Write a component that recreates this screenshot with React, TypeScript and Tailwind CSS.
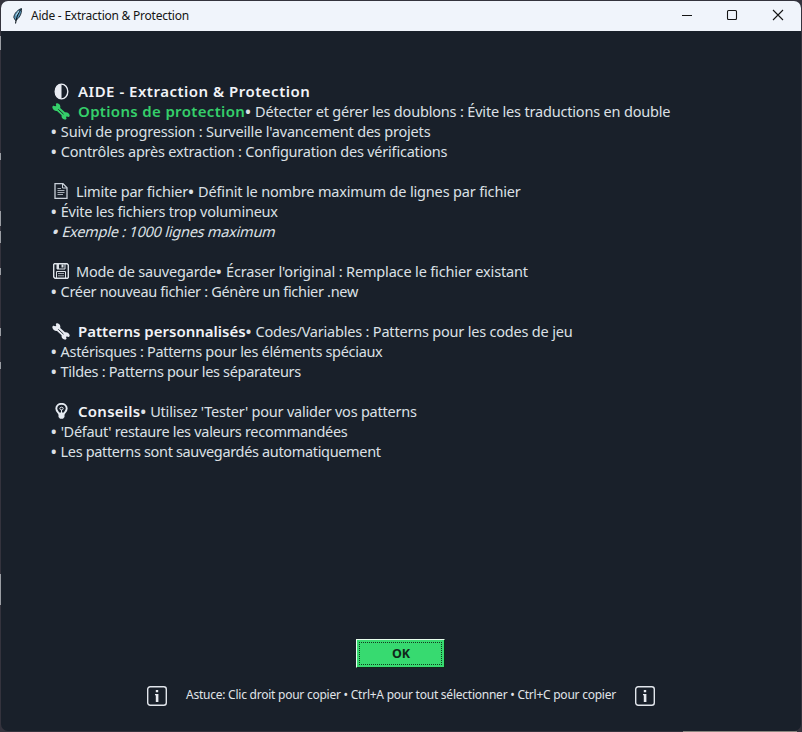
import React, { useLayoutEffect, useRef, useState } from "react";

type TextRunProps = { w: number; children: string; className?: string };

// A run of text whose tracking is adjusted to fill a given width.
function Run({ w, children, className = "" }: TextRunProps) {
  const ref = useRef<HTMLSpanElement>(null);
  const [spacing, setSpacing] = useState(0);
  useLayoutEffect(() => {
    const natural = ref.current!.offsetWidth - spacing * children.length;
    setSpacing((w - natural) / children.length);
  }, [w, children]);
  const bulleted = children.startsWith("•");
  return (
    <span ref={ref} className={"inline-block shrink-0 whitespace-pre " + className} style={{ letterSpacing: spacing }}>
      {bulleted && <span className="mr-px font-bold">• </span>}
      {bulleted ? children.slice(2) : children}
    </span>
  );
}

function Feather() {
  return (
    <svg className="ml-[10px] h-4 w-[14px] shrink-0" viewBox="0 0 14 16">
      <path d="M10.500.5C7 1.500 3 5.500 2.800 9.500L4.500 12.500C8 10.500 11 6 10.500.5Z" fill="#5796ba" stroke="#17212b" strokeWidth=".9" />
      <path d="M9.800 1.500C7 5 5.500 9 4.500 15.500" fill="none" stroke="#0c151d" strokeWidth="1.100" />
      <path d="M8 3L5 7.500" stroke="#b9e0f0" />
    </svg>
  );
}

function HalfCircle() {
  return (
    <svg className="mr-[8px] ml-[3px] h-[17px] w-[15px] shrink-0" viewBox="0 0 15 17">
      <path d="M7.500 1A6.400 7.500 0 0 0 7.500 16Z" fill="#e8ebf2" />
      <ellipse cx="7.500" cy="8.500" rx="6.300" ry="7.400" fill="none" stroke="#e8ebf2" strokeWidth="1.400" />
    </svg>
  );
}

function Wrench({ className }: { className: string }) {
  return (
    <svg className={"mr-[7px] ml-px h-[17px] w-[18px] shrink-0 " + className} viewBox="0 0 18 17">
      <path
        d="M.3 4.200C.3 3 1.300 2.300 2.300 2.900L3.600 3.300L4.300 2.600L3.900 1.700C3.700.6 4.800-.1 6 .4C8 1.200 8.700 3 8.200 4.900L13 9.300C15.400 8.900 17.500 10.500 17.700 12.600C17.700 13.800 16.700 14.200 15.900 13.700L14.700 13.400L14 14.100L14.400 15C14.800 16.200 13.700 16.900 12.500 16.600C10.300 16 9.200 14.200 9.600 12.300L5 8C2.800 8.200.7 6.700.3 4.200Z"
        fill="currentColor"
      />
      <path d="M6.300 6.300L11.500 11.200" stroke="#19202a" strokeWidth=".9" />
    </svg>
  );
}

function Page() {
  return (
    <svg className="mr-[8px] ml-[3px] h-4 w-[14px] shrink-0" viewBox="0 0 14 16" fill="none" stroke="#c9d0d9">
      <path d="M1 .7H9L13 4.700V15.300H1Z" strokeWidth="1.300" />
      <path d="M8.500 1V5H13" />
      <path d="M3.500 5.500H7M3.500 7.500H10.500M3.500 9.500H10.500M3.500 11.500H9" strokeWidth=".8" />
    </svg>
  );
}

function Floppy() {
  return (
    <svg className="mr-[7px] ml-[2px] h-4 w-4 shrink-0" viewBox="0 0 16 16" fill="none" stroke="#dce2e8">
      <path d="M1.500.7H14L15.300 2V14.500L14.500 15.300H2L.7 14V1.500Z" strokeWidth="1.400" />
      <path d="M4 1V6H12V1M3.500 15V8.500H12.500V15" />
      <path d="M5 10.500H11M5 12.800H11" strokeWidth=".7" />
      <path d="M4 1H6V6H4ZM8.500 1.500H10.500V4.500H8.500Z" fill="#dce2e8" stroke="none" />
    </svg>
  );
}

function Bulb() {
  return (
    <svg className="mr-[9px] ml-[4px] h-4 w-[13px] shrink-0" viewBox="0 0 13 16">
      <path d="M4 10.500C3 8.800 1.300 8 1.300 5.600A5.200 4.800 0 0 1 11.700 5.600C11.700 8 10 8.800 9 10.500Z" fill="none" stroke="#e5eaf1" strokeWidth="1.900" />
      <path d="M6.500 10V7M4.800 5.700A1.700 1.500 0 1 1 8.200 5.700C8.200 7.300 4.800 7.300 4.800 5.700Z" fill="none" stroke="#e5eaf1" />
      <path d="M3.500 10H9.500V14L8 15.800H5L3.500 14Z" fill="#e5eaf1" />
    </svg>
  );
}

function Info() {
  return (
    <svg className="h-5 w-5 shrink-0" viewBox="0 0 20 20">
      <rect x=".7" y=".7" width="18.600" height="18.600" rx="2.500" fill="none" stroke="#e2e6ec" strokeWidth="1.400" />
      <path d="M8.800 4H11.200V6.200H8.800ZM8 8H11.400V16H8.800V9.300H8Z" fill="#e8ebf0" />
    </svg>
  );
}

function Line({ children }: { children?: React.ReactNode }) {
  return <div className="flex h-5 items-center leading-5">{children}</div>;
}

// Slivers of the desktop seen along the window's left edge.
const slivers = [
  { top: 36, height: 14 },
  { top: 153, height: 7 },
  { top: 211, height: 15 },
  { top: 231, height: 12 },
  { top: 268, height: 7 },
  { top: 328, height: 8 },
  { top: 362, height: 7 },
  { top: 574, height: 31 },
];

export default function App() {
  return (
    <div className="relative h-[732px] w-[802px] overflow-hidden bg-[#34333d] px-px pt-px pb-[2px] font-['Noto_Sans',sans-serif]">
      {slivers.map((s) => (
        <i key={s.top} className="absolute left-0 w-px bg-[#9a9da3]" style={{ top: s.top, height: s.height }} />
      ))}
      <i className="absolute right-[5px] bottom-0 h-px w-[114px] bg-[#89857f]" />
      <div className="flex h-[730px] w-[800px] flex-col overflow-hidden rounded-[7px] bg-[#19202a]">
        <header className="flex h-[30px] shrink-0 items-center bg-[#f0f4fb] text-[12px] text-[#151515]">
          <Feather />
          <div className="ml-[6px] flex">
            <Run w={158}>Aide - Extraction &amp; Protection</Run>
          </div>
          <svg className="-mt-[2px] mr-[16px] ml-auto h-3 w-[104px]" viewBox="0 0 104 12" fill="none" stroke="#151515">
            <path d="M1 6.500H11" />
            <rect x="46.500" y="1.500" width="9" height="9" rx="1" strokeWidth="1.100" />
            <path d="M92 1L102 11M102 1L92 11" strokeWidth="1.100" />
          </svg>
        </header>

        <main className="h-[608px] shrink-0 pt-[50px] pl-[50px] text-[14.5px] text-[#dce0e6]">
          <Line><HalfCircle /><Run w={232} className="ml-px text-[15px] font-semibold text-[#f1f3f7]">AIDE - Extraction &amp; Protection</Run></Line>
          <Line><Wrench className="text-[#35cf6a]" /><Run w={167} className="ml-px text-[15px] font-semibold text-[#35cf6a]">Options de protection</Run><Run w={425}>• Détecter et gérer les doublons : Évite les traductions en double</Run></Line>
          <Line><Run w={379}>• Suivi de progression : Surveille l'avancement des projets</Run></Line>
          <Line><Run w={396}>• Contrôles après extraction : Configuration des vérifications</Run></Line>
          <Line />
          <Line><Page /><Run w={112}>Limite par fichier</Run><Run w={332}>• Définit le nombre maximum de lignes par fichier</Run></Line>
          <Line><Run w={227}>• Évite les fichiers trop volumineux</Run></Line>
          <Line><Run w={223} className="ml-[2px] origin-center -skew-x-[15deg]">• Exemple : 1000 lignes maximum</Run></Line>
          <Line />
          <Line><Floppy /><Run w={140}>Mode de sauvegarde</Run><Run w={312}>• Écraser l'original : Remplace le fichier existant</Run></Line>
          <Line><Run w={307}>• Créer nouveau fichier : Génère un fichier .new</Run></Line>
          <Line />
          <Line><Wrench className="text-[#e8ebf2]" /><Run w={168} className="ml-px text-[15px] font-semibold text-[#f1f3f7]">Patterns personnalisés</Run><Run w={327}>• Codes/Variables : Patterns pour les codes de jeu</Run></Line>
          <Line><Run w={331}>• Astérisques : Patterns pour les éléments spéciaux</Run></Line>
          <Line><Run w={250}>• Tildes : Patterns pour les séparateurs</Run></Line>
          <Line />
          <Line><Bulb /><Run w={62} className="ml-px text-[15px] font-semibold text-[#f1f3f7]">Conseils</Run><Run w={276}>• Utilisez 'Tester' pour valider vos patterns</Run></Line>
          <Line><Run w={296}>• 'Défaut' restaure les valeurs recommandées</Run></Line>
          <Line><Run w={330}>• Les patterns sont sauvegardés automatiquement</Run></Line>
        </main>

        <button className="ml-[355px] flex h-[29px] w-[89px] shrink-0 border border-t-[#e8ffee] border-r-[#10271a] border-b-[#10271a] border-l-[#e8ffee] bg-[#37da70] p-[2px] text-[12.5px] font-bold text-[#10271a]">
          <span className="flex h-full w-full items-center justify-center border border-dotted border-[#12391f] pt-[2px] pl-px">
            <Run w={18}>OK</Run>
          </span>
        </button>

        <footer className="mt-[17px] ml-[146px] flex h-[22px] items-center text-[12px] text-[#e0e4e9]">
          <Info />
          <div className="-mt-[2px] mr-[19px] ml-[19px] flex">
            <Run w={430}>Astuce: Clic droit pour copier • Ctrl+A pour tout sélectionner • Ctrl+C pour copier</Run>
          </div>
          <Info />
        </footer>
      </div>
    </div>
  );
}
